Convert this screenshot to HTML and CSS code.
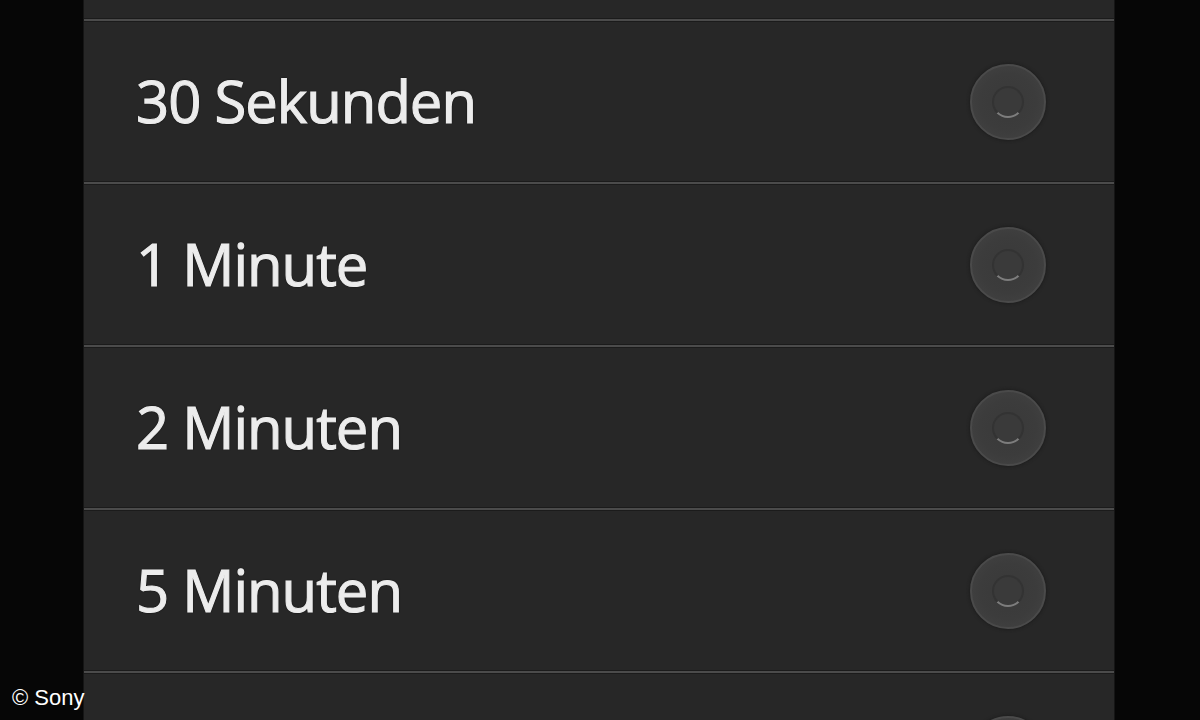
FILE: index.html
```html
<!DOCTYPE html>
<html lang="de">
<head>
    <meta charset="UTF-8">
    <title>Bildschirm-Timeout</title>
    <link rel="stylesheet" href="styles.css">
</head>
<body>
    <main class="panel">
        <div class="row partial-top"></div>
        <div class="sep"></div>
        <div class="row">
            <span class="label">30 Sekunden</span>
            <span class="radio"></span>
        </div>
        <div class="sep"></div>
        <div class="row">
            <span class="label">1 Minute</span>
            <span class="radio"></span>
        </div>
        <div class="sep"></div>
        <div class="row">
            <span class="label">2 Minuten</span>
            <span class="radio"></span>
        </div>
        <div class="sep"></div>
        <div class="row">
            <span class="label">5 Minuten</span>
            <span class="radio"></span>
        </div>
        <div class="sep"></div>
        <div class="row">
            <span class="label"></span>
            <span class="radio"></span>
        </div>
    </main>
    <div class="credit">© Sony</div>
</body>
</html>
```

FILE: styles.css
```css
html, body {
    margin: 0;
    padding: 0;
    height: 720px;
    overflow: hidden;
}

body {
    background-color: #060606;
    font-family: "Open Sans", "Noto Sans", sans-serif;
    position: relative;
}

.panel {
    width: 1030px;
    margin-left: 84px;
    background-color: #272727;
    display: flex;
    flex-direction: column;
    box-shadow: -1px 0 0 #151515, 1px 0 0 #151515;
}

.row {
    height: 159px;
    flex: none;
    display: flex;
    align-items: center;
    justify-content: space-between;
    padding: 0 68px 0 52px;
}

.partial-top {
    height: 18px;
}

.sep {
    height: 2px;
    flex: none;
    background-color: #4b4b4b;
    border-top: 1px solid #1b1b1b;
    border-bottom: 1px solid #1b1b1b;
}

.label {
    color: #ececec;
    font-size: 58px;
    letter-spacing: -1px;
    line-height: 1;
    padding-bottom: 2px;
    -webkit-text-stroke: 1.1px #ececec;
    text-shadow: 0 0 2px #000, 0 0 1px #000;
}

.radio {
    width: 72px;
    height: 72px;
    border-radius: 50%;
    background: radial-gradient(circle, #393939 0, #3c3c3c 55%, #444 100%);
    border: 2px solid #4a4a4a;
    box-shadow: 0 0 3px 1px #1e1e1e;
    display: flex;
    align-items: center;
    justify-content: center;
}

.radio::before {
    content: "";
    width: 28px;
    height: 28px;
    border-radius: 50%;
    border: 2px solid #333;
    border-bottom-color: #7d7d7d;
    background-color: #3a3a3a;
}

.credit {
    position: absolute;
    left: 12px;
    top: 685px;
    color: #fff;
    font-family: "Liberation Sans", Arial, sans-serif;
    font-size: 22px;
}
```
